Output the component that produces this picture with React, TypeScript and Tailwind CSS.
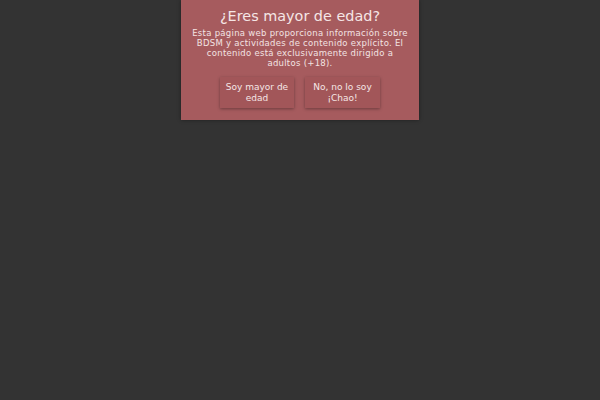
import React from 'react';

export default function App() {
    return (
        <div className="w-[600px] h-[400px] bg-[#333333] flex justify-center" style={{ fontFamily: '"DejaVu Sans", sans-serif' }}>
            <div className="w-[238px] h-[120px] bg-[#a65b5e] flex flex-col items-center shadow-[0_0_4px_rgba(0,0,0,0.4)] px-[10px] pt-[7px]">
                <h1 className="text-[14.4px] leading-[18px] text-[#f5e6e6]">¿Eres mayor de edad?</h1>
                <p className="text-[8.5px] leading-[10px] text-[#f3e3e3] text-center mt-[3px] tracking-[0.28px]">
                    Esta página web proporciona información sobre BDSM y actividades de contenido explícito. El contenido está exclusivamente dirigido a adultos (+18).
                </p>
                <div className="flex gap-[11px] mt-[9px]">
                    <button className="w-[74px] h-[31px] text-[9px] leading-[11px] text-[#f5e6e6] bg-[#a25659] shadow-[0_1px_3px_rgba(0,0,0,0.35)]">
                        Soy mayor de edad
                    </button>
                    <button className="w-[75px] h-[31px] text-[9px] leading-[11px] text-[#f5e6e6] bg-[#a25659] shadow-[0_1px_3px_rgba(0,0,0,0.35)]">
                        No, no lo soy ¡Chao!
                    </button>
                </div>
            </div>
        </div>
    );
}
